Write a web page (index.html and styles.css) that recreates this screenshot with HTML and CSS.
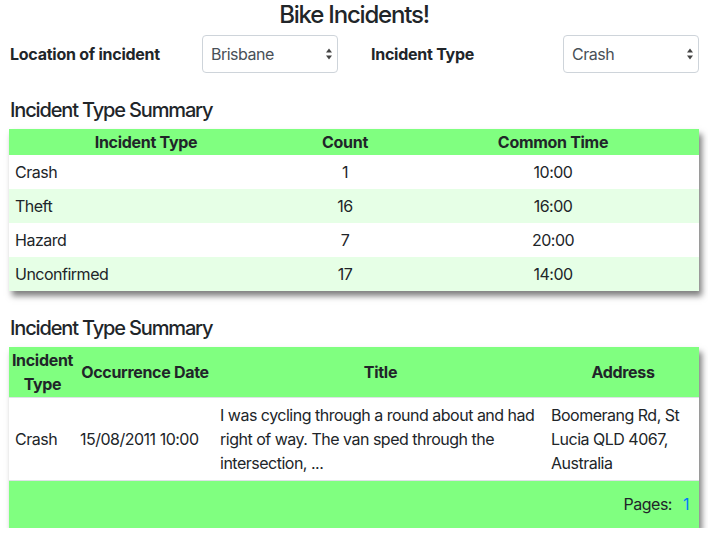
FILE: index.html
```html
<!DOCTYPE html>
<html lang="en">
<head>
<meta charset="utf-8">
<title>Bike Incidents!</title>
<link rel="stylesheet" href="styles.css">
</head>
<body>
<div class="page">
  <h1 class="title">Bike Incidents!</h1>
  <div class="filters">
    <div class="field">
      <label class="field-label" for="loc">Location of incident</label>
      <div class="select-wrap">
        <select id="loc" class="select"><option>Brisbane</option></select>
        <svg class="select-arrows" width="8" height="14" viewBox="0 0 8 14"><path d="M4 1.5 L7 5.5 L1 5.5 Z M4 12.5 L7 8.5 L1 8.5 Z" fill="#444"/></svg>
      </div>
    </div>
    <div class="field">
      <label class="field-label" for="type">Incident Type</label>
      <div class="select-wrap">
        <select id="type" class="select"><option>Crash</option></select>
        <svg class="select-arrows" width="8" height="14" viewBox="0 0 8 14"><path d="M4 1.5 L7 5.5 L1 5.5 Z M4 12.5 L7 8.5 L1 8.5 Z" fill="#444"/></svg>
      </div>
    </div>
  </div>

  <h2 class="section-title">Incident Type Summary</h2>
  <div class="card">
    <table class="grid summary">
      <colgroup><col class="c-type"><col class="c-count"><col class="c-time"></colgroup>
      <thead><tr><th>Incident Type</th><th>Count</th><th>Common Time</th></tr></thead>
      <tbody>
        <tr><td>Crash</td><td class="center">1</td><td class="center">10:00</td></tr>
        <tr class="alt"><td>Theft</td><td class="center">16</td><td class="center">16:00</td></tr>
        <tr><td>Hazard</td><td class="center">7</td><td class="center">20:00</td></tr>
        <tr class="alt"><td>Unconfirmed</td><td class="center">17</td><td class="center">14:00</td></tr>
      </tbody>
    </table>
  </div>

  <h2 class="section-title second">Incident Type Summary</h2>
  <div class="card">
    <table class="grid detail">
      <colgroup><col class="d-type"><col class="d-date"><col class="d-title"><col class="d-addr"></colgroup>
      <thead><tr><th>Incident Type</th><th>Occurrence Date</th><th>Title</th><th>Address</th></tr></thead>
      <tbody>
        <tr class="bordered"><td>Crash</td><td>15/08/2011 10:00</td><td>I was cycling through a round about and had right of way. The van sped through the intersection, ...</td><td>Boomerang Rd, St Lucia QLD 4067, Australia</td></tr>
      </tbody>
    </table>
    <div class="pager">Pages: <a class="page-link" href="#">1</a></div>
  </div>
</div>
</body>
</html>
```

FILE: styles.css
```css
* { box-sizing: border-box; }
html, body { margin: 0; padding: 0; background: #fff; }
body {
  font-family: Inter, "Noto Sans", "Liberation Sans", sans-serif;
  font-size: 16px;
  line-height: 24px;
  color: #212529;
  letter-spacing: -0.5px;
}
.page { padding: 0 9px; }
.title {
  margin: 0;
  font-size: 24px;
  line-height: 29px;
  font-weight: 500;
  letter-spacing: -1.2px;
  text-align: center;
}
.filters {
  display: flex;
  gap: 32px;
  margin-top: 6px;
}
.field { display: flex; align-items: center; }
.field-label {
  width: 193px;
  padding-left: 1px;
  font-weight: 700;
  letter-spacing: -0.25px;
}
.select-wrap { position: relative; width: 136px; }
.select {
  -webkit-appearance: none;
  appearance: none;
  width: 136px;
  height: 38px;
  padding: 0 24px 0 8px;
  border: 1px solid #ced4da;
  border-radius: 4px;
  background: #fff;
  color: #495057;
  font: inherit;
  letter-spacing: -0.5px;
}
.select-arrows {
  position: absolute;
  right: 5px;
  top: 12px;
}
.section-title {
  margin: 25px 0 7px;
  font-size: 20px;
  line-height: 24px;
  font-weight: 500;
  letter-spacing: -1.15px;
  padding-left: 1px;
}
.card {
  background: #fff;
  box-shadow: 3px 5px 6px rgba(0, 0, 0, 0.5);
}
.grid {
  width: 100%;
  border-collapse: collapse;
  table-layout: fixed;
}
.grid th {
  background: #80ff80;
  font-weight: 700;
  text-align: center;
  padding: 1px 2px;
  vertical-align: middle;
  letter-spacing: -0.3px;
}
.grid td {
  padding: 5px 6px;
  vertical-align: middle;
  text-align: left;
}
.grid td.center { text-align: center; }
.grid tr.alt td { background: #e6ffe6; }
.c-type { width: 274px; }
.c-count { width: 124px; }
.c-time { width: 292px; }
.d-type { width: 67px; }
.d-date { width: 138px; }
.d-title { width: 333px; }
.d-addr { width: 152px; }
.detail td { padding: 5px 4px; }
.detail td:first-child { padding-left: 6px; }
.detail td:nth-child(3) { padding-left: 6px; }
.grid tr.bordered td {
  border-top: 1px solid #dee2e6;
  border-bottom: 1px solid #dee2e6;
}
.pager {
  background: #80ff80;
  text-align: right;
  padding: 11px 10px 12px 0;
}
.page-link {
  color: #007bff;
  text-decoration: none;
  margin-left: 7px;
}
```
